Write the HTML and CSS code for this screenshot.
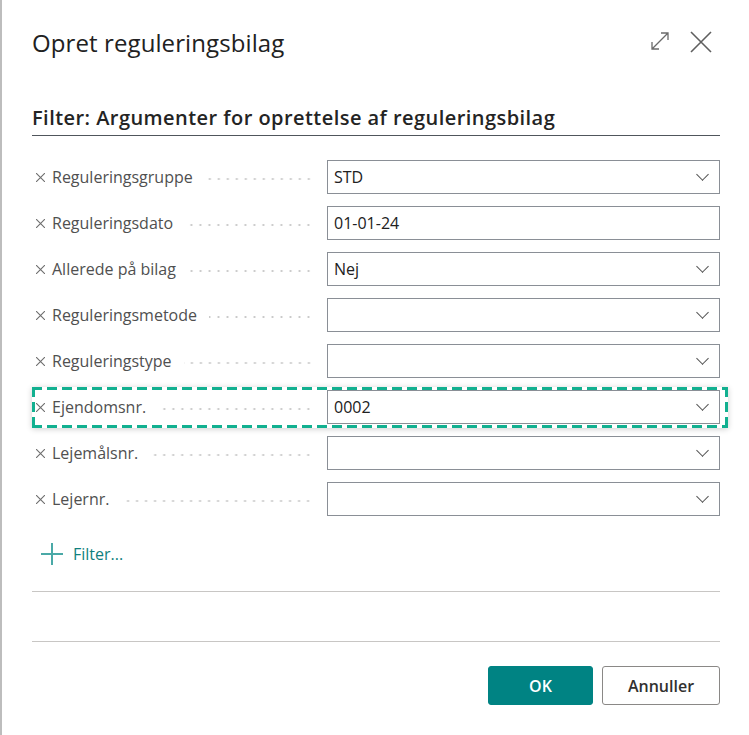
FILE: index.html
```html
<!DOCTYPE html>
<html lang="da">
<head>
  <meta charset="UTF-8" />
  <title>Opret reguleringsbilag</title>
  <link rel="stylesheet" href="styles.css">
</head>
<body>

  <div class="dialog">
    <div class="dialog-header">
      <h1>Opret reguleringsbilag</h1>
      <div class="header-icons">
        <svg class="icon-expand" width="20" height="20" viewBox="0 0 20 20">
          <path d="M2 18 L18 2 M11 2 H18 V9 M2 11 V18 H9" fill="none" stroke="#6b6b6b" stroke-width="1.3"/>
        </svg>
        <svg class="icon-close" width="22" height="22" viewBox="0 0 22 22">
          <path d="M1 1 L21 21 M21 1 L1 21" fill="none" stroke="#5f5f5f" stroke-width="1.6"/>
        </svg>
      </div>
    </div>

    <h2 class="section-title">Filter: Argumenter for oprettelse af reguleringsbilag</h2>

    <div class="filters">
      <div class="row">
        <div class="label"><svg class="remove" width="9" height="9" viewBox="0 0 9 9"><path d="M0 0 L9 9 M9 0 L0 9"/></svg><span class="text">Reguleringsgruppe</span><span class="leader"></span></div>
        <div class="field select"><span>STD</span></div>
      </div>
      <div class="row">
        <div class="label"><svg class="remove" width="9" height="9" viewBox="0 0 9 9"><path d="M0 0 L9 9 M9 0 L0 9"/></svg><span class="text">Reguleringsdato</span><span class="leader"></span></div>
        <div class="field"><span>01-01-24</span></div>
      </div>
      <div class="row">
        <div class="label"><svg class="remove" width="9" height="9" viewBox="0 0 9 9"><path d="M0 0 L9 9 M9 0 L0 9"/></svg><span class="text">Allerede på bilag</span><span class="leader"></span></div>
        <div class="field select"><span>Nej</span></div>
      </div>
      <div class="row">
        <div class="label"><svg class="remove" width="9" height="9" viewBox="0 0 9 9"><path d="M0 0 L9 9 M9 0 L0 9"/></svg><span class="text">Reguleringsmetode</span><span class="leader"></span></div>
        <div class="field select"><span></span></div>
      </div>
      <div class="row">
        <div class="label"><svg class="remove" width="9" height="9" viewBox="0 0 9 9"><path d="M0 0 L9 9 M9 0 L0 9"/></svg><span class="text">Reguleringstype</span><span class="leader"></span></div>
        <div class="field select"><span></span></div>
      </div>
      <div class="row focused">
        <div class="label"><svg class="remove" width="9" height="9" viewBox="0 0 9 9"><path d="M0 0 L9 9 M9 0 L0 9"/></svg><span class="text">Ejendomsnr.</span><span class="leader"></span></div>
        <div class="field select"><span>0002</span></div>
      </div>
      <div class="row">
        <div class="label"><svg class="remove" width="9" height="9" viewBox="0 0 9 9"><path d="M0 0 L9 9 M9 0 L0 9"/></svg><span class="text">Lejemålsnr.</span><span class="leader"></span></div>
        <div class="field select"><span></span></div>
      </div>
      <div class="row">
        <div class="label"><svg class="remove" width="9" height="9" viewBox="0 0 9 9"><path d="M0 0 L9 9 M9 0 L0 9"/></svg><span class="text">Lejernr.</span><span class="leader"></span></div>
        <div class="field select"><span></span></div>
      </div>
    </div>

    <div class="add-filter">
      <svg width="22" height="22" viewBox="0 0 22 22">
        <path d="M11 0 V22 M0 11 H22" stroke="#4aa9a7" stroke-width="2"/>
      </svg>
      <span>Filter...</span>
    </div>

    <div class="divider"></div>
    <div class="divider"></div>

    <div class="actions">
      <button class="btn primary">OK</button>
      <button class="btn">Annuller</button>
    </div>
  </div>

</body>
</html>
```

FILE: styles.css
```css
html, body { margin: 0; height: 100%; }
body {
  background: #bdbdbd;
  font-family: "Open Sans", "Noto Sans", sans-serif;
  color: #212121;
}

.dialog {
  box-sizing: border-box;
  margin-left: 2px;
  height: 100%;
  background: #fff;
  padding: 1px 29px 0 30px;
}

.dialog-header {
  display: flex;
  align-items: center;
  justify-content: space-between;
  height: 82px;
}
.dialog-header h1 {
  margin: 0;
  font-size: 24px;
  font-weight: 400;
  letter-spacing: 0.1px;
  color: #212121;
}
.header-icons { display: flex; align-items: center; gap: 20px; padding-right: 8px; }
.icon-expand { margin-top: -2px; }

.section-title {
  margin: 21px 0 0;
  padding-bottom: 4px;
  font-size: 20px;
  font-weight: 600;
  letter-spacing: 0.45px;
  color: #242424;
  border-bottom: 1px solid #50565c;
}

.filters { margin-top: 24px; display: flex; flex-direction: column; gap: 12px; }
.row { display: flex; align-items: center; position: relative; }
.label {
  width: 295px;
  display: flex;
  align-items: center;
  padding-right: 14px;
  box-sizing: border-box;
  color: #505050;
  font-size: 16px;
}
.remove {
  flex: none;
  margin: 0 7px 0 4px;
  stroke: #6e6e6e;
  stroke-width: 1.1;
}
.leader {
  flex: 1;
  height: 4px;
  margin-left: 12px;
  margin-top: 3px;
  background-image: radial-gradient(circle, #cacaca 0.9px, transparent 1.3px);
  background-size: 9px 4px;
  background-repeat: repeat-x;
  background-position: right center;
}

.field {
  flex: 1;
  height: 34px;
  box-sizing: border-box;
  border: 1px solid #8a8f96;
  display: flex;
  align-items: center;
  padding: 0 10px 0 6px;
  font-size: 16px;
  color: #212121;
}
.field span { flex: 1; }
.select::after {
  content: "";
  width: 8px;
  height: 8px;
  border-right: 1px solid #505050;
  border-bottom: 1px solid #505050;
  transform: rotate(45deg);
  margin: -6px 2px 0 0;
}

.row.focused::after {
  content: "";
  position: absolute;
  top: -3px;
  bottom: -4px;
  left: 0;
  right: -8px;
  background:
    repeating-linear-gradient(90deg, #12b090 0 10px, transparent 10px 15px) top / 100% 3px no-repeat,
    repeating-linear-gradient(90deg, #12b090 0 10px, transparent 10px 15px) bottom / 100% 3px no-repeat,
    repeating-linear-gradient(180deg, #12b090 0 10px, transparent 10px 15px) left / 3px 100% no-repeat,
    repeating-linear-gradient(180deg, #12b090 0 10px, transparent 10px 15px) right / 3px 100% no-repeat;
  box-shadow: 0 1px 6px rgba(0, 0, 0, 0.2);
  pointer-events: none;
}

.add-filter {
  display: flex;
  align-items: center;
  gap: 10px;
  margin: 27px 0 0 9px;
  color: #0f7f7e;
  font-size: 16px;
}

.divider { height: 1px; background: #c8c6c4; margin-top: 26px; }
.divider + .divider { margin-top: 49px; }

.actions {
  display: flex;
  justify-content: flex-end;
  gap: 9px;
  margin-top: 24px;
}
.btn {
  height: 39px;
  border-radius: 3px;
  border: 1px solid #8a8886;
  background: #fff;
  color: #323130;
  font-family: "Open Sans", "Noto Sans", sans-serif;
  font-size: 16px;
  font-weight: 600;
  width: 118px;
}
.btn.primary {
  width: 105px;
  background: #008383;
  border-color: #008383;
  color: #fff;
}
```
